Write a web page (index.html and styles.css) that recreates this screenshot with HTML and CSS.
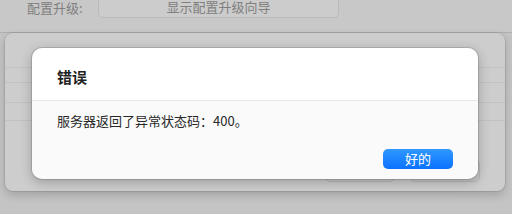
FILE: index.html
```html
<!DOCTYPE html>
<html lang="zh-CN">

<head>
    <meta charset="UTF-8">
    <meta name="viewport" content="width=device-width, initial-scale=1.0">
    <title>错误</title>
    <link rel="stylesheet" href="styles.css">
</head>

<body>
    <div class="toolbar">
        <span class="label">配置升级:</span>
        <span class="wizard-btn">显示配置升级向导</span>
    </div>
    <div class="sheet">
        <div class="rows">
            <div class="row r1"></div>
            <div class="row r2"></div>
            <div class="row r3"></div>
            <div class="row r4"></div>
        </div>
        <div class="sheet-footer">
            <span class="ghost-btn"></span>
            <span class="ghost-btn"></span>
        </div>
    </div>
    <div class="alert">
        <div class="alert-head">错误</div>
        <div class="alert-body">
            <p>服务器返回了异常状态码：400。</p>
            <div class="alert-actions">
                <button class="ok-btn">好的</button>
            </div>
        </div>
    </div>
</body>

</html>
```

FILE: styles.css
```css
body {
    font-family: "Noto Sans CJK SC", "Liberation Sans", sans-serif;
    background-color: rgb(196, 196, 196);
    margin: 0;
    width: 512px;
    height: 214px;
    overflow: hidden;
    position: relative;
}

.toolbar {
    display: flex;
    align-items: flex-start;
    height: 32px;
    border-bottom: 1px solid rgb(176, 176, 176);
    background-color: rgb(200, 200, 200);
    color: rgb(128, 128, 128);
    font-size: 13px;
    line-height: 15px;
}

.toolbar .label {
    padding-left: 27px;
    width: 57px;
}

.wizard-btn {
    margin-left: 14px;
    margin-top: -4px;
    width: 239px;
    height: 19px;
    border: 1px solid rgb(186, 186, 186);
    border-radius: 5px;
    background-color: rgb(204, 204, 204);
    text-align: center;
    line-height: 18px;
    padding-top: 1px;
}

.sheet {
    margin-left: 5px;
    width: 500px;
    height: 158px;
    border-radius: 8px;
    background-color: rgb(205, 205, 205);
    box-shadow: 0 0 0 1px rgba(0, 0, 0, 0.08), 0 4px 10px rgba(0, 0, 0, 0.18);
    display: flex;
    flex-direction: column;
}

.rows {
    padding-top: 34px;
    flex: 1;
}

.row {
    border-top: 1px solid rgba(0, 0, 0, 0.05);
}

.r1 { height: 14px; }
.r2 { height: 19px; }
.r3 { height: 17px; }
.r4 { height: 32px; }

.sheet-footer {
    display: flex;
    justify-content: flex-end;
    gap: 15px;
    padding: 0 25px 9px 0;
}

.ghost-btn {
    width: 68px;
    height: 21px;
    border: 1px solid rgb(186, 186, 186);
    border-radius: 5px;
    background-color: rgb(200, 200, 200);
}

.alert {
    position: absolute;
    left: 32px;
    top: 48px;
    width: 446px;
    height: 131px;
    border-radius: 10px;
    overflow: hidden;
    box-shadow: 0 0 0 1px rgba(0, 0, 0, 0.12), 0 3px 12px rgba(0, 0, 0, 0.25);
}

.alert-head {
    height: 52px;
    background-color: white;
    border-bottom: 1px solid rgb(230, 230, 230);
    padding-left: 25px;
    font-size: 15px;
    font-weight: bold;
    line-height: 58px;
    color: rgb(34, 34, 34);
}

.alert-body {
    background-color: rgb(250, 250, 250);
    padding: 11px 25px 10px 25px;
    height: 57px;
}

.alert-body p {
    margin: 0;
    font-size: 13px;
    line-height: 18px;
    color: rgb(40, 40, 40);
}

.alert-actions {
    display: flex;
    justify-content: flex-end;
    margin-top: 19px;
}

.ok-btn {
    width: 70px;
    height: 20px;
    border: none;
    border-radius: 5px;
    background: linear-gradient(rgb(48, 152, 255), rgb(10, 114, 255));
    color: white;
    font-family: "Noto Sans CJK SC", sans-serif;
    font-size: 13px;
    line-height: 20px;
    padding: 0;
}
```
